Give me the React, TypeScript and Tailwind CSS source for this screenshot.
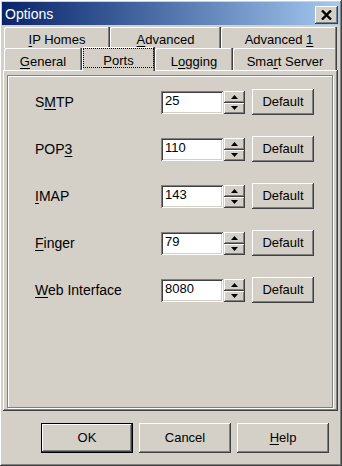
import React from "react";

const raised =
  "shadow-[inset_-1px_-1px_#404040,inset_1px_1px_#ffffff,inset_-2px_-2px_#808080,inset_2px_2px_#d4d0c8]";
const sunken =
  "shadow-[inset_1px_1px_#808080,inset_-1px_-1px_#ffffff,inset_2px_2px_#404040,inset_-2px_-2px_#d4d0c8]";
const tabShadow =
  "shadow-[inset_-1px_0_#404040,inset_-2px_0_#808080,inset_1px_1px_#ffffff]";

function U({ children }: { children: React.ReactNode }) {
  return <span className="underline underline-offset-[2px] decoration-1">{children}</span>;
}

function Tab({ w, children }: { w: string; children: React.ReactNode }) {
  return (
    <div className={`${w} h-full flex items-center justify-center bg-[#d4d0c8] rounded-tl-[2px] ${tabShadow}`}>
      <span className="pt-[5px]">{children}</span>
    </div>
  );
}

function Spinner() {
  return (
    <div className="flex flex-col w-[21px] h-[23px] ml-[1px]">
      <div className={`h-[12px] flex items-center justify-center bg-[#d4d0c8] ${raised}`}>
        <svg width="7" height="4" viewBox="0 0 7 4">
          <polygon points="3.5,0 7,4 0,4" fill="#000" />
        </svg>
      </div>
      <div className={`h-[11px] flex items-center justify-center bg-[#d4d0c8] ${raised}`}>
        <svg width="7" height="4" viewBox="0 0 7 4">
          <polygon points="0,0 7,0 3.5,4" fill="#000" />
        </svg>
      </div>
    </div>
  );
}

function Row({ label, value }: { label: React.ReactNode; value: string }) {
  return (
    <div className="flex items-center h-[26px]">
      <div className="w-[126px] whitespace-pre text-[14px]">{label}</div>
      <div className={`w-[62px] h-[23px] bg-white flex items-center pl-[4px] pb-[2px] ${sunken}`}>{value}</div>
      <Spinner />
      <div className={`ml-[7px] w-[62px] h-[26px] flex items-center justify-center bg-[#d4d0c8] ${raised}`}>
        Default
      </div>
    </div>
  );
}

export default function App() {
  return (
    <div
      className={`w-[342px] h-[466px] bg-[#d4d0c8] p-[2px] flex flex-col text-[13px] text-black ${raised}`}
      style={{ fontFamily: '"Liberation Sans", Arial, sans-serif' }}
    >
      {/* Title bar */}
      <div className="h-[23px] flex items-center justify-between bg-linear-to-r from-[#0a246a] to-[#a6caf0]">
        <span className="pl-[3px] pt-[2px] text-white text-[14px]">Options</span>
        <div className={`w-[23px] h-[18px] mr-[2px] mt-[3px] flex items-center justify-center bg-[#d4d0c8] ${raised}`}>
          <svg width="11" height="10" viewBox="0 0 11 10">
            <path d="M1 0.5 L10 9.5 M10 0.5 L1 9.5" stroke="#000" strokeWidth="2.4" />
          </svg>
        </div>
      </div>

      {/* Tab control */}
      <div className="mt-[2px] ml-[1px] w-[335px] flex flex-col flex-1">
        <div className="flex h-[21px] pl-[1px]">
          <Tab w="w-[106px]">
            <U>I</U>P Homes
          </Tab>
          <Tab w="w-[111px]">
            <U>A</U>dvanced
          </Tab>
          <Tab w="w-[116px]">
            Advanced <U>1</U>
          </Tab>
        </div>
        <div className="flex h-[22px] pl-[1px]">
          <Tab w="w-[78px]">
            <U>G</U>eneral
          </Tab>
          <div
            className={`relative z-10 w-[73px] h-[24px] -mt-[1px] bg-[#d4d0c8] rounded-tl-[2px] flex p-[1px] pb-[3px] shadow-[inset_-1px_0_#404040,inset_-2px_0_#808080,inset_1px_1px_#ffffff]`}
          >
            <div className="flex-1 border border-dotted border-black flex justify-center pt-[2px]">
              <span>
                <U>P</U>orts
              </span>
            </div>
          </div>
          <Tab w="w-[78px]">
            L<U>o</U>gging
          </Tab>
          <Tab w="w-[104px]">
            Sma<U>r</U>t Server
          </Tab>
        </div>
        <div className={`h-[341px] flex pl-[4px] pt-[5px] pr-[5px] pb-[3px] ${raised}`}>
          <div className="flex-1 border border-[#808080] shadow-[inset_1px_1px_#ffffff,1px_1px_#ffffff] pl-[27px] pt-[13px] flex flex-col gap-[21px]">
            <Row
              label={
                <>
                  S<U>M</U>TP
                </>
              }
              value="25"
            />
            <Row
              label={
                <>
                  POP<U>3</U>
                </>
              }
              value="110"
            />
            <Row
              label={
                <>
                  <U>I</U>MAP
                </>
              }
              value="143"
            />
            <Row
              label={
                <>
                  <U>F</U>inger
                </>
              }
              value="79"
            />
            <Row
              label={
                <>
                  <U>W</U>eb Interface
                </>
              }
              value="8080"
            />
          </div>
        </div>
      </div>

      {/* Bottom buttons */}
      <div className="flex gap-[6px] pl-[39px] mt-[12px] mb-[11px]">
        <div className="w-[92px] h-[30px] border border-black">
          <div className={`w-full h-full flex items-center justify-center bg-[#d4d0c8] ${raised}`}>OK</div>
        </div>
        <div className={`w-[92px] h-[30px] flex items-center justify-center bg-[#d4d0c8] ${raised}`}>Cancel</div>
        <div className={`w-[92px] h-[30px] flex items-center justify-center bg-[#d4d0c8] ${raised}`}>
          <span>
            <U>H</U>elp
          </span>
        </div>
      </div>
    </div>
  );
}
